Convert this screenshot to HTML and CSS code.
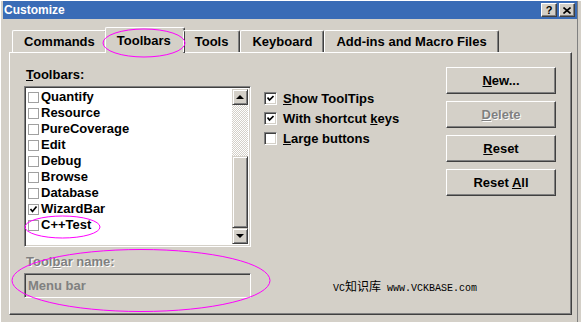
FILE: index.html
```html
<!DOCTYPE html>
<html lang="en">
<head>
    <meta charset="UTF-8">
    <title>Customize</title>
    <link rel="stylesheet" href="styles.css">
</head>
<body>
    <div class="window">
        <div class="titlebar">
            <span class="title">Customize</span>
            <div class="caption-btns">
                <span class="cap-btn">?</span>
                <span class="cap-btn">
                    <svg width="8" height="7" viewBox="0 0 8 7"><path d="M0.5 0.5 L7.5 6.5 M7.5 0.5 L0.5 6.5" stroke="#000" stroke-width="1.6"/></svg>
                </span>
            </div>
        </div>

        <div class="tabs">
            <div class="tab">Commands</div>
            <div class="tab active">Toolbars</div>
            <div class="tab">Tools</div>
            <div class="tab">Keyboard</div>
            <div class="tab">Add-ins and Macro Files</div>
        </div>

        <div class="panel">
            <div class="col-list">
                <div class="label"><u>T</u>oolbars:</div>
                <div class="listbox">
                    <ul class="items">
                        <li><span class="tick"></span>Quantify</li>
                        <li><span class="tick"></span>Resource</li>
                        <li><span class="tick"></span>PureCoverage</li>
                        <li><span class="tick"></span>Edit</li>
                        <li><span class="tick"></span>Debug</li>
                        <li><span class="tick"></span>Browse</li>
                        <li><span class="tick"></span>Database</li>
                        <li><span class="tick"><svg width="9" height="9" viewBox="0 0 9 9"><path d="M1.5 4 L3.5 6.5 L7.5 1.5" fill="none" stroke="#000" stroke-width="1.7"/></svg></span>WizardBar</li>
                        <li><span class="tick"></span>C++Test</li>
                    </ul>
                    <div class="scrollbar">
                        <div class="sb-btn"><span class="arrow-up"></span></div>
                        <div class="sb-track"></div>
                        <div class="sb-thumb"></div>
                        <div class="sb-btn"><span class="arrow-down"></span></div>
                    </div>
                </div>
                <div class="label label-disabled">Tool<u>b</u>ar name:</div>
                <div class="textbox">Menu bar</div>
            </div>

            <div class="col-options">
                <label class="option"><span class="check"><svg width="7" height="7" viewBox="0 0 7 7"><path d="M0.5 2.5 L2.5 5 L6.5 1" fill="none" stroke="#000" stroke-width="1.7"/></svg></span><span><u>S</u>how ToolTips</span></label>
                <label class="option"><span class="check"><svg width="7" height="7" viewBox="0 0 7 7"><path d="M0.5 2.5 L2.5 5 L6.5 1" fill="none" stroke="#000" stroke-width="1.7"/></svg></span><span>With shortcut <u>k</u>eys</span></label>
                <label class="option"><span class="check"></span><span><u>L</u>arge buttons</span></label>
                <div class="watermark">VC<span class="cjk">知识库</span> www.VCKBASE.com</div>
            </div>

            <div class="col-buttons">
                <button class="btn"><u>N</u>ew...</button>
                <button class="btn btn-disabled"><u>D</u>elete</button>
                <button class="btn"><u>R</u>eset</button>
                <button class="btn">Reset <u>A</u>ll</button>
            </div>
        </div>

        <!-- annotation marks drawn over the dialog -->
        <svg class="marks" width="581" height="322">
            <ellipse cx="144" cy="43" rx="41" ry="14" />
            <ellipse cx="62.5" cy="227" rx="37.5" ry="11" />
            <ellipse cx="141" cy="280.5" rx="129" ry="31" />
        </svg>
    </div>
</body>
</html>
```

FILE: styles.css
```css
body {
    margin: 0;
    padding: 0;
    overflow: hidden;
    background: #d4d0c8;
}

.window {
    position: relative;
    width: 581px;
    height: 322px;
    box-sizing: border-box;
    padding: 1px 0 0 3px;
    background: #d4d0c8;
    box-shadow: inset 1px 1px 0 #fff, inset -3px 0 0 #d4d0c8, inset -4px 0 0 #808080;
    font-family: "Liberation Sans", Arial, sans-serif;
    font-size: 13px;
    font-weight: bold;
    color: #000;
}

.titlebar {
    width: 574px;
    height: 18px;
    background: #3a6cb6;
    display: flex;
    align-items: center;
    justify-content: space-between;
}

.title {
    color: #fff;
    padding-left: 1px;
    font-size: 12px;
}

.caption-btns {
    display: flex;
    gap: 2px;
    padding-right: 2px;
}

.cap-btn {
    width: 16px;
    height: 14px;
    box-sizing: border-box;
    background: #d4d0c8;
    border: 1px solid;
    border-color: #fff #404040 #404040 #fff;
    box-shadow: inset -1px -1px 0 #808080;
    display: flex;
    align-items: center;
    justify-content: center;
    font-size: 11px;
    line-height: 12px;
}

/* tabs */
.tabs {
    display: flex;
    align-items: flex-end;
    height: 25px;
    margin-top: 8px;
    padding-left: 9px;
    position: relative;
    z-index: 2;
}

.tab {
    height: 22px;
    box-sizing: border-box;
    padding: 3px 11px 0;
    border: 1px solid;
    border-bottom: none;
    border-color: #fff #404040 #fff #fff;
    border-radius: 2px 2px 0 0;
    box-shadow: inset -1px 0 0 #808080;
    line-height: 15px;
    white-space: nowrap;
}

.tab.active {
    height: 26px;
    margin: 0 -2px -1px;
    padding-top: 5px;
    padding-left: 11px;
    padding-right: 13px;
    background: #d4d0c8;
}

/* panel */
.panel {
    margin-left: 6px;
    width: 563px;
    height: 263px;
    box-sizing: border-box;
    border: 1px solid;
    border-color: #fff #404040 #404040 #fff;
    box-shadow: inset -1px -1px 0 #808080;
    padding-left: 14px;
    display: grid;
    grid-template-columns: 227px 195px 110px;
}

.col-list {
    grid-column: 1;
    display: flex;
    flex-direction: column;
    padding-top: 15px;
}

.label {
    line-height: 14px;
    padding-left: 2px;
}

.label-disabled {
    margin-top: 8px;
    color: #808080;
    text-shadow: 1px 1px 0 #fff;
}

.listbox {
    margin-top: 4px;
    height: 161px;
    box-sizing: border-box;
    border: 1px solid;
    border-color: #808080 #fff #fff #808080;
    box-shadow: inset 1px 1px 0 #404040, inset -1px -1px 0 #d4d0c8;
    background: #fff;
    padding: 2px;
    display: flex;
}

.items {
    list-style: none;
    margin: 0;
    padding: 0;
    flex: 1;
}

.items li {
    height: 16px;
    line-height: 16px;
    display: flex;
    align-items: center;
    padding-left: 1px;
}

.tick {
    width: 11px;
    height: 11px;
    box-sizing: border-box;
    border: 1px solid #a0a0a0;
    margin-right: 2px;
    display: flex;
    align-items: center;
    justify-content: center;
    background: #fff;
}

.scrollbar {
    width: 16px;
    display: flex;
    flex-direction: column;
}

.sb-btn,
.sb-thumb {
    box-sizing: border-box;
    background: #d4d0c8;
    border: 1px solid;
    border-color: #d4d0c8 #404040 #404040 #d4d0c8;
    box-shadow: inset 1px 1px 0 #fff, inset -1px -1px 0 #808080;
}

.sb-btn {
    height: 16px;
    display: flex;
    align-items: center;
    justify-content: center;
}

.sb-track {
    height: 51px;
    background: repeating-conic-gradient(#fff 0 25%, #d4d0c8 0 50%) 0 0 / 2px 2px;
}

.sb-thumb {
    flex: 1;
}

.arrow-up,
.arrow-down {
    width: 0;
    height: 0;
    border-left: 4px solid transparent;
    border-right: 4px solid transparent;
}

.arrow-up {
    border-bottom: 4px solid #000;
}

.arrow-down {
    border-top: 4px solid #000;
}

.textbox {
    margin-top: 4px;
    height: 25px;
    box-sizing: border-box;
    border: 1px solid;
    border-color: #808080 #fff #fff #808080;
    box-shadow: inset 1px 1px 0 #404040, inset -1px -1px 0 #d4d0c8;
    padding: 4px 3px;
    line-height: 15px;
    color: #808080;
}

/* middle options */
.col-options {
    grid-column: 2;
    display: flex;
    flex-direction: column;
    padding-top: 35px;
    padding-left: 13px;
}

.option {
    height: 20px;
    display: flex;
    align-items: center;
    white-space: nowrap;
}

.check {
    width: 13px;
    height: 13px;
    box-sizing: border-box;
    border: 1px solid;
    border-color: #808080 #fff #fff #808080;
    box-shadow: inset 1px 1px 0 #404040, inset -1px -1px 0 #d4d0c8;
    background: #fff;
    margin-right: 6px;
    display: flex;
    align-items: center;
    justify-content: center;
}

.watermark {
    margin-top: auto;
    margin-bottom: 18px;
    padding-left: 69px;
    font-family: "Liberation Mono", monospace;
    font-size: 10px;
    font-weight: normal;
    line-height: 14px;
    white-space: nowrap;
}

.cjk {
    font-family: "Noto Sans CJK SC", sans-serif;
    font-size: 12px;
}

/* buttons */
.col-buttons {
    grid-column: 3;
    display: flex;
    flex-direction: column;
    gap: 7px;
    padding-top: 14px;
}

.btn {
    height: 27px;
    box-sizing: border-box;
    background: #d4d0c8;
    border: 1px solid;
    border-color: #fff #404040 #404040 #fff;
    box-shadow: inset -1px -1px 0 #808080;
    font: inherit;
    color: #000;
    padding: 0;
}

.btn-disabled {
    color: #808080;
    text-shadow: 1px 1px 0 #fff;
}

.marks {
    position: absolute;
    top: 0;
    left: 0;
    pointer-events: none;
    z-index: 5;
}

.marks ellipse {
    fill: none;
    stroke: #ff00ff;
    stroke-width: 1;
}
```
